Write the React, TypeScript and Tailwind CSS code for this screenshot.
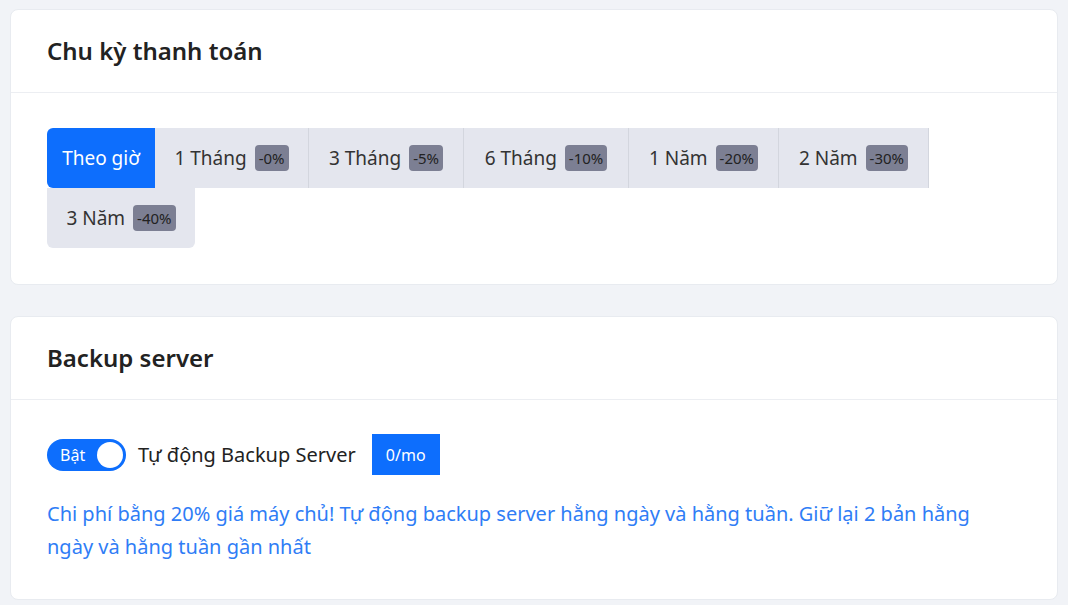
const opts = [
  { label: 'Theo giờ', w: 'w-[108px]' },
  { label: '1 Tháng', d: '-0%', w: 'w-[154px]' },
  { label: '3 Tháng', d: '-5%', w: 'w-[155px]' },
  { label: '6 Tháng', d: '-10%', w: 'w-[165px]' },
  { label: '1 Năm', d: '-20%', w: 'w-[150px]' },
  { label: '2 Năm', d: '-30%', w: 'w-[150px]' },
  { label: '3 Năm', d: '-40%', w: 'w-[148px]' },
];

export default function App() {
  return (
    <div className="min-h-[605px] bg-[#f1f3f7] px-[10px] pt-[9px] font-['Lato','Noto_Sans',sans-serif] text-[#212529]">
      <div className="rounded-lg bg-white border border-[#e8ebf0]">
        <div className="h-[83px] flex items-center px-9 border-b border-[#eceef2]">
          <h2 className="text-[24px] font-semibold text-[#222]">Chu kỳ thanh toán</h2>
        </div>
        <div className="px-9 pt-[35px] pb-[36px]">
          <div className="flex flex-wrap">
            {opts.map((o, i) => (
              <div
                key={o.label}
                className={`${o.w} h-[60px] flex items-center justify-center gap-2 text-[19px] ${
                  i === 0 ? 'bg-[#0d6efd] text-white rounded-l-md' : 'bg-[#e4e6ee] text-[#333] border-r border-[#d3d6de]'
                } ${i === 6 ? 'rounded-b-md border-r-0' : ''}`}
              >
                <span>{o.label}</span>
                {o.d && (
                  <span className="bg-[#7c7f93] text-[#222] text-[15px] rounded px-1 py-[2px]">{o.d}</span>
                )}
              </div>
            ))}
          </div>
        </div>
      </div>

      <div className="mt-[31px] rounded-lg bg-white border border-[#e8ebf0]">
        <div className="h-[83px] flex items-center px-9 border-b border-[#eceef2]">
          <h2 className="text-[24px] font-semibold text-[#222]">Backup server</h2>
        </div>
        <div className="px-9 pt-[34px] pb-[36px]">
          <div className="flex items-center gap-3">
            <div className="w-[79px] h-[32px] rounded-full bg-[#0d6efd] flex items-center justify-between pl-[13px] pr-[3px]">
              <span className="text-white text-[16px]">Bật</span>
              <span className="w-[26px] h-[26px] rounded-full bg-white"></span>
            </div>
            <span className="text-[20px] text-[#222]">Tự động Backup Server</span>
            <span className="ml-1 bg-[#0d6efd] text-white text-[16px] h-[41px] w-[68px] flex items-center justify-center">0/mo</span>
          </div>
          <p className="mt-[22px] text-[20px] leading-[33px] text-[#2f7df6]">
            Chi phí bằng 20% giá máy chủ! Tự động backup server hằng ngày và hằng tuần. Giữ lại 2 bản hằng ngày và hằng tuần gần nhất
          </p>
        </div>
      </div>
    </div>
  );
}
